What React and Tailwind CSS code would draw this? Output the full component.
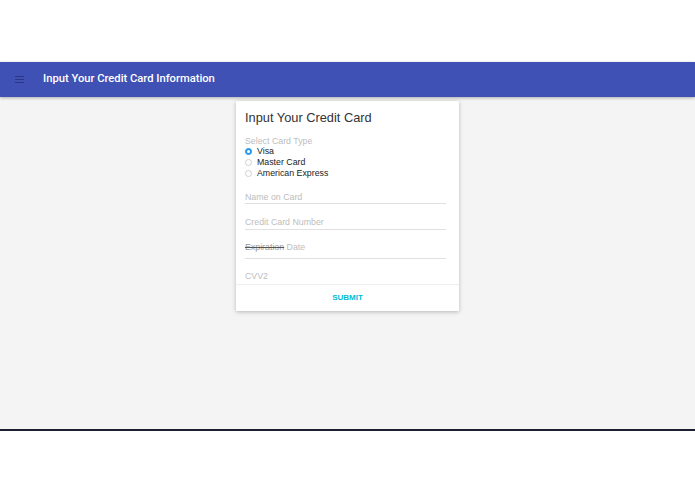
export default function App() {
  return (
    <div className="w-[695px] h-[494px] bg-white flex flex-col">
      <div className="h-[62px] bg-white" />
      <div className="h-[35px] bg-[#3f51b5] flex items-center shadow-[0_1px_3px_rgba(0,0,0,0.3)] relative z-10">
        <div className="w-[43px] flex justify-center pr-[4px]">
          <div className="flex flex-col gap-[1.5px]">
            <div className="w-[9px] h-[1.5px] bg-[#2a3785]" />
            <div className="w-[9px] h-[1.5px] bg-[#2a3785]" />
            <div className="w-[9px] h-[1.5px] bg-[#2a3785]" />
          </div>
        </div>
        <div className="text-white text-[11.2px] font-medium font-['Roboto',sans-serif]">Input Your Credit Card Information</div>
      </div>
      <div className="h-[332px] bg-[#f4f4f4] flex justify-center pt-[4px]">
        <div className="w-[223px] h-[210px] bg-white shadow-[0_1px_4px_rgba(0,0,0,0.25)] flex flex-col font-['Liberation_Sans',sans-serif]">
          <div className="pl-[9px] pr-[13px] flex flex-col">
            <div className="text-[12.8px] text-[#333] mt-[9px] leading-[16px]">Input Your Credit Card</div>
            <div className="text-[8.8px] text-[#bdbdbd] mt-[10px] leading-[10px]">Select Card Type</div>
            {[
              ["Visa", true],
              ["Master Card", false],
              ["American Express", false],
            ].map(([l, c]) => (
              <div key={l} className="flex items-center h-[11px] text-[8.8px] text-[#222]">
                <div
                  className={
                    c
                      ? "w-[7px] h-[7px] rounded-full bg-[#2196f3] border border-[#2196f3] flex items-center justify-center mr-[5px]"
                      : "w-[7px] h-[7px] rounded-full border border-[#d0d0d0] mr-[5px]"
                  }
                >
                  {c ? <div className="w-[3px] h-[3px] rounded-full bg-white" /> : null}
                </div>
                <span>{l}</span>
              </div>
            ))}
            <div className="h-[25px] border-b border-[#e0e0e0] text-[8.8px] leading-[10px] text-[#bdbdbd] pt-[13px]">Name on Card</div>
            <div className="h-[26px] border-b border-[#e0e0e0] text-[8.8px] leading-[10px] text-[#bdbdbd] pt-[13px]">Credit Card Number</div>
            <div className="h-[29px] border-b border-[#e0e0e0] text-[8.8px] leading-[10px] text-[#bdbdbd] pt-[12px]">
              <span className="text-[#999] line-through decoration-[#555]">Expiration</span> Date
            </div>
            <div className="h-[25px] text-[8.8px] leading-[10px] text-[#bdbdbd] pt-[12px]">CVV2</div>
          </div>
          <div className="border-t border-[#eee] flex-1 flex items-center justify-center">
            <span className="text-[8px] font-bold text-[#00bcd4]">SUBMIT</span>
          </div>
        </div>
      </div>
      <div className="h-[2px] bg-[#1a2030]" />
      <div className="flex-1 bg-white" />
    </div>
  );
}
